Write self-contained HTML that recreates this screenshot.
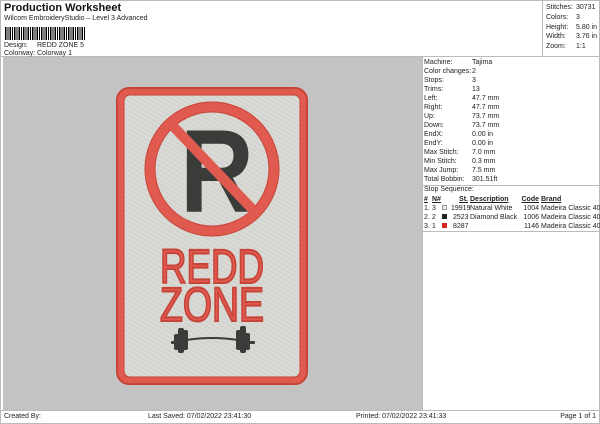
<!DOCTYPE html>
<html><head><meta charset="utf-8"><style>
*{margin:0;padding:0;box-sizing:border-box}
body{width:600px;height:424px;background:#fff;font-family:"Liberation Sans",Arial,sans-serif;color:#222;position:relative;overflow:hidden;font-size:7px}
.abs{position:absolute;white-space:nowrap}
.bar{position:absolute;left:5px;top:27px;width:80px;height:13px;background:repeating-linear-gradient(90deg,#000 0 1.5px,#fff 1.5px 2.6px,#000 2.6px 3.4px,#fff 3.4px 4.5px)}
table{border-collapse:collapse;table-layout:fixed}
td{padding:0;height:9px;line-height:9px;font-size:7px;white-space:nowrap;overflow:visible}
</style></head><body>
<div style="position:absolute;left:0;top:0;width:600px;height:424px;border:1px solid #bbb"></div>
<div style="position:absolute;left:542px;top:0;width:1px;height:57px;background:#bbb"></div>
<div style="position:absolute;left:0;top:56px;width:600px;height:1px;background:#bbb"></div>
<div class="abs" style="left:4px;top:2px;font-size:11px;font-weight:bold;color:#111">Production Worksheet</div>
<div class="abs" style="left:4px;top:15px">Wilcom EmbroideryStudio – Level 3 Advanced</div>
<div class="bar"></div>
<div class="abs" style="left:4px;top:42px">Design:</div><div class="abs" style="left:37px;top:42px">REDD ZONE 5</div>
<div class="abs" style="left:4px;top:50px">Colorway:</div><div class="abs" style="left:37px;top:50px">Colorway 1</div>
<div class="abs" style="left:546px;top:3px;line-height:9.8px">Stitches:<br>Colors:<br>Height:<br>Width:<br>Zoom:</div>
<div class="abs" style="left:576px;top:3px;line-height:9.8px">30731<br>3<br>5.80 in<br>3.76 in<br>1:1</div>
<div style="position:absolute;left:3px;top:57px;width:419px;height:353px;background:#c3c3c3"></div>
<div style="position:absolute;left:422px;top:57px;width:1px;height:353px;background:#bbb"></div>
<div style="position:absolute;left:0;top:410px;width:600px;height:1px;background:#bbb"></div>
<div class="abs" style="left:424px;top:58px;line-height:9px">Machine:<br>Color changes:<br>Stops:<br>Trims:<br>Left:<br>Right:<br>Up:<br>Down:<br>EndX:<br>EndY:<br>Max Stitch:<br>Min Stitch:<br>Max Jump:<br>Total Bobbin:</div>
<div class="abs" style="left:472px;top:58px;line-height:9px">Tajima<br>2<br>3<br>13<br>47.7 mm<br>47.7 mm<br>73.7 mm<br>73.7 mm<br>0.00 in<br>0.00 in<br>7.0 mm<br>0.3 mm<br>7.5 mm<br>301.51ft</div>
<div style="position:absolute;left:423px;top:185px;width:177px;height:1px;background:#bbb"></div>
<div class="abs" style="left:424px;top:186px">Stop Sequence:</div>
<div style="position:absolute;left:423px;top:231px;width:177px;height:1px;background:#bbb"></div>
<table style="position:absolute;left:424px;top:195px;width:176px">
<colgroup><col style="width:8px"><col style="width:10px"><col style="width:26px"><col style="width:53px"><col style="width:18px"><col style="width:61px"></colgroup>
<tr style="font-weight:bold;text-decoration:underline"><td>#</td><td>N#</td><td style="text-align:right">St.</td><td style="padding-left:2px">Description</td><td style="text-align:right">Code</td><td style="padding-left:2px">Brand</td></tr>
<tr><td>1.</td><td>3</td><td style="text-align:right"><span style="display:inline-block;width:5px;height:5px;background:#eee;border:1px solid #999;margin-right:4px"></span>19919</td><td style="padding-left:2px">Natural White</td><td style="text-align:right">1004</td><td style="padding-left:2px">Madeira Classic 40</td></tr>
<tr><td>2.</td><td>2</td><td style="text-align:right"><span style="display:inline-block;width:5px;height:5px;background:#222;margin-right:6px"></span>2523</td><td style="padding-left:2px">Diamond Black</td><td style="text-align:right">1006</td><td style="padding-left:2px">Madeira Classic 40</td></tr>
<tr><td>3.</td><td>1</td><td style="text-align:right"><span style="display:inline-block;width:5px;height:5px;background:#d22;margin-right:6px"></span>8287</td><td></td><td style="text-align:right">1146</td><td style="padding-left:2px">Madeira Classic 40</td></tr>
</table>
<div class="abs" style="left:4px;top:413px">Created By:</div>
<div class="abs" style="left:148px;top:413px">Last Saved: 07/02/2022 23:41:30</div>
<div class="abs" style="left:356px;top:413px">Printed: 07/02/2022 23:41:33</div>
<div class="abs" style="right:4px;top:413px">Page 1 of 1</div>
<svg style="position:absolute;left:0;top:0" width="600" height="424">
<defs><pattern id="d" width="4" height="4" patternUnits="userSpaceOnUse" patternTransform="rotate(-60)"><rect width="4" height="4" fill="#d9d9d5"/><rect width="1" height="4" fill="#cfcfca"/></pattern></defs>
<rect x="117" y="88" width="190" height="296" rx="12" fill="#e05a50" stroke="#c74439" stroke-width="2"/>
<rect x="124" y="95" width="176" height="282" rx="6" fill="url(#d)" stroke="#c74439" stroke-width="1"/>
<text x="180" y="212" font-family="Liberation Sans" font-weight="bold" font-size="118" fill="#3a3c3a" textLength="74" lengthAdjust="spacingAndGlyphs">R</text>
<circle cx="212" cy="169" r="62" fill="none" stroke="#e05a50" stroke-width="10"/>
<circle cx="212" cy="169" r="67" fill="none" stroke="#c74439" stroke-width="1"/>
<circle cx="212" cy="169" r="57" fill="none" stroke="#c74439" stroke-width="1"/>
<line x1="172" y1="125" x2="255" y2="212" stroke="#e05a50" stroke-width="10"/>
<text x="212" y="283" text-anchor="middle" font-family="Liberation Sans" font-size="48" fill="#e05a50" stroke="#c74439" stroke-width="2" textLength="104" lengthAdjust="spacingAndGlyphs">REDD</text>
<text x="212" y="321" text-anchor="middle" font-family="Liberation Sans" font-size="48" fill="#e05a50" stroke="#c74439" stroke-width="2" textLength="104" lengthAdjust="spacingAndGlyphs">ZONE</text>
<g fill="#3a3c3a">
<path d="M186 340 Q212 336 238 340" stroke="#3a3c3a" stroke-width="2" fill="none"/>
<rect x="171" y="341" width="6" height="3" rx="1"/>
<rect x="174" y="334" width="5" height="16" rx="2"/>
<rect x="178" y="328" width="6" height="25" rx="2"/>
<rect x="183" y="330" width="5" height="20" rx="2"/>
<rect x="236" y="330" width="5" height="20" rx="2"/>
<rect x="240" y="326" width="6" height="27" rx="2"/>
<rect x="245" y="333" width="5" height="17" rx="2"/>
<rect x="249" y="341" width="6" height="3" rx="1"/>
</g>
</svg>
</body></html>
